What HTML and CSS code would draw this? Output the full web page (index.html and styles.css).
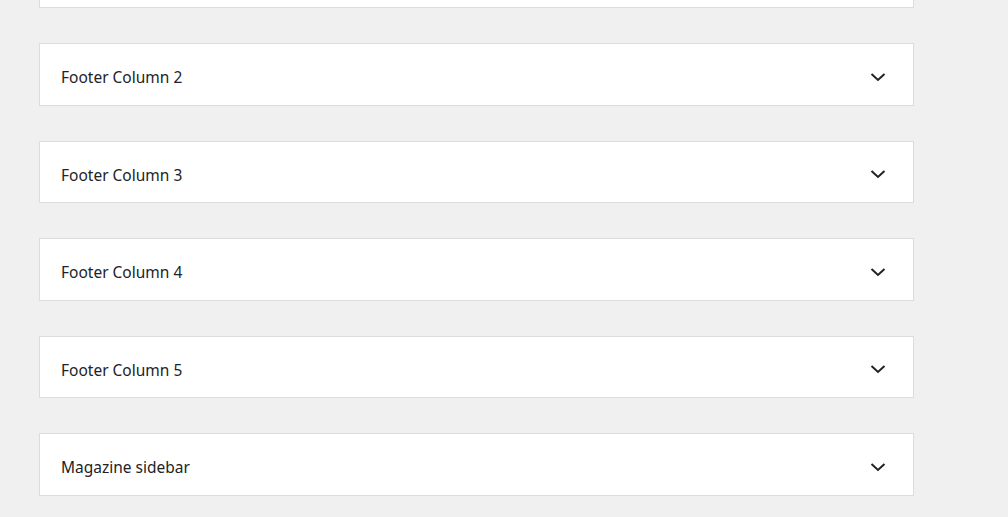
FILE: index.html
```html
<!DOCTYPE html>
<html lang="en">
<head>
<meta charset="utf-8">
<title>Widgets</title>
<link rel="stylesheet" href="styles.css">
</head>
<body>
<div class="areas">
  <div class="area">
    <div class="area-head"><svg class="chev" viewBox="0 0 16 10" width="16" height="10"><polyline points="1.5,2 8,8 14.5,2"/></svg></div>
  </div>
  <div class="area">
    <div class="area-head"><h3 class="area-title">Footer Column 2</h3><svg class="chev" viewBox="0 0 16 10" width="16" height="10"><polyline points="1.5,2 8,8 14.5,2"/></svg></div>
  </div>
  <div class="area">
    <div class="area-head"><h3 class="area-title">Footer Column 3</h3><svg class="chev" viewBox="0 0 16 10" width="16" height="10"><polyline points="1.5,2 8,8 14.5,2"/></svg></div>
  </div>
  <div class="area">
    <div class="area-head"><h3 class="area-title">Footer Column 4</h3><svg class="chev" viewBox="0 0 16 10" width="16" height="10"><polyline points="1.5,2 8,8 14.5,2"/></svg></div>
  </div>
  <div class="area">
    <div class="area-head"><h3 class="area-title">Footer Column 5</h3><svg class="chev" viewBox="0 0 16 10" width="16" height="10"><polyline points="1.5,2 8,8 14.5,2"/></svg></div>
  </div>
  <div class="area">
    <div class="area-head"><h3 class="area-title">Magazine sidebar</h3><svg class="chev" viewBox="0 0 16 10" width="16" height="10"><polyline points="1.5,2 8,8 14.5,2"/></svg></div>
  </div>
</div>
</body>
</html>
```
FILE: styles.css
```css
html, body {
  margin: 0;
  padding: 0;
  background: #f0f0f0;
  height: 100%;
  overflow: hidden;
}
body {
  font-family: "Noto Sans", "Open Sans", "Liberation Sans", sans-serif;
  color: #1d2327;
}
.areas {
  display: flex;
  flex-direction: column;
  gap: 35.5px;
  width: 875px;
  margin: -54.5px 0 0 39px;
}
.area {
  background: #fff;
  border: 1px solid #dcdcde;
  box-sizing: border-box;
  height: 62.5px;
}
.area:nth-child(n) {
  margin-bottom: -0.5px;
}
.area-head {
  display: flex;
  align-items: center;
  justify-content: flex-end;
  height: 100%;
  padding: 0 27px 0 21px;
  box-sizing: border-box;
}
.area-title {
  margin: 0 auto 0 0;
  font-size: 15.5px;
  font-weight: 400;
  line-height: 20px;
  padding-top: 6px;
}
.chev {
  display: block;
  margin-top: 5px;
}
.chev polyline {
  fill: none;
  stroke: #1d2327;
  stroke-width: 2;
}
```
